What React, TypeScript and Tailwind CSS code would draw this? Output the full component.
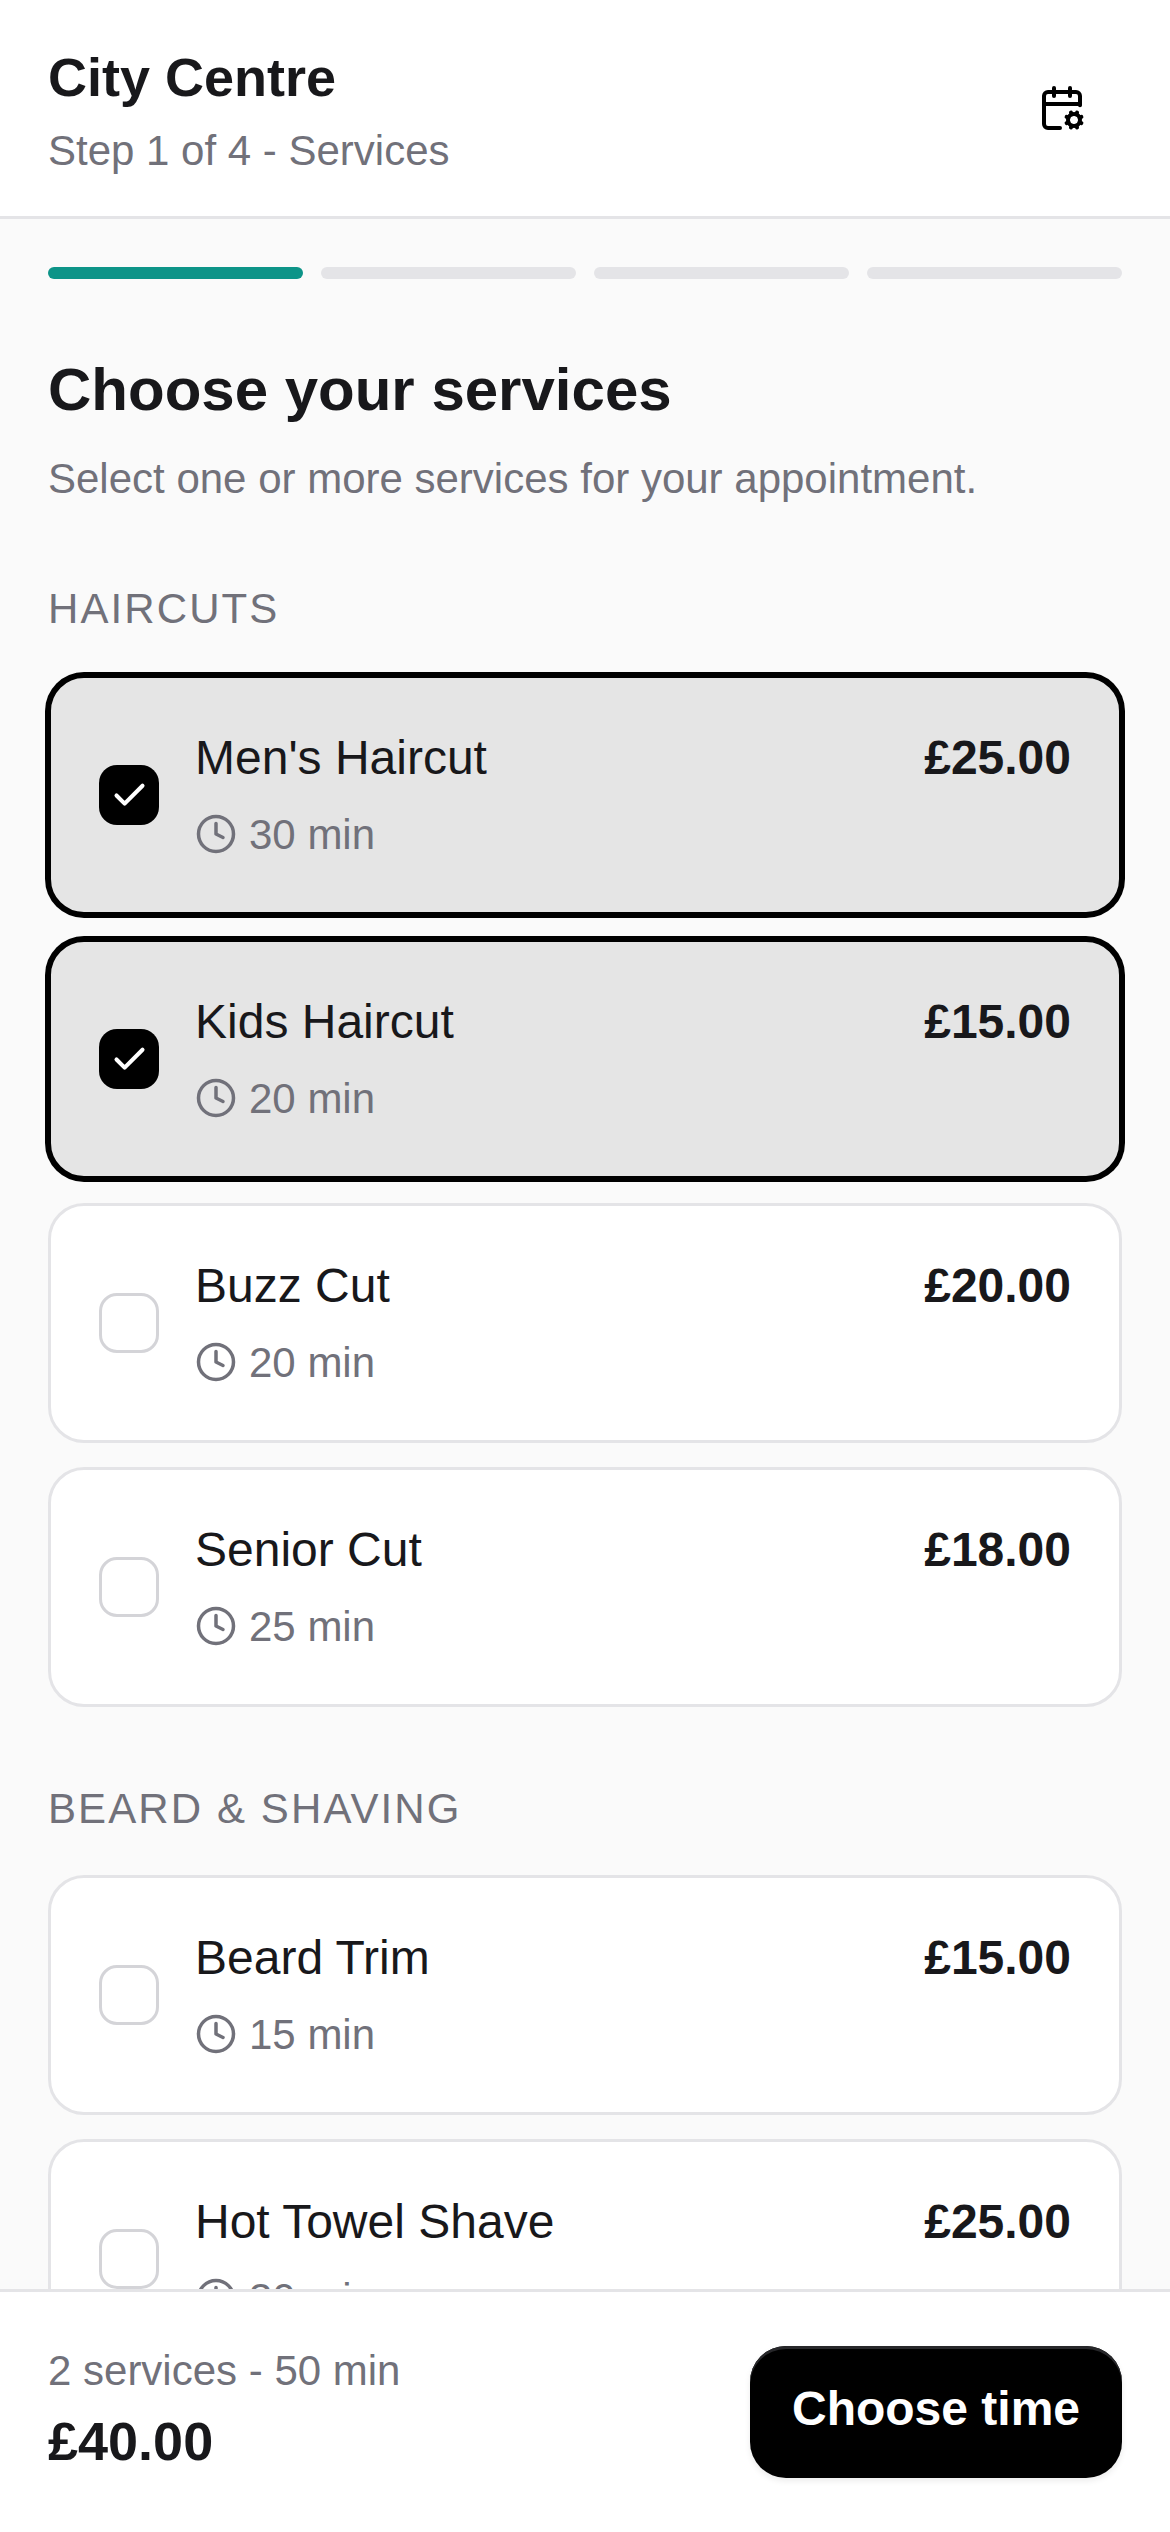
import { Check, Clock, CalendarCog } from "lucide-react";

type Service = { name: string; min: number; price: string; on?: boolean };

const haircuts: Service[] = [
  { name: "Men's Haircut", min: 30, price: "£25.00", on: true },
  { name: "Kids Haircut", min: 20, price: "£15.00", on: true },
  { name: "Buzz Cut", min: 20, price: "£20.00" },
  { name: "Senior Cut", min: 25, price: "£18.00" },
];
const beard: Service[] = [
  { name: "Beard Trim", min: 15, price: "£15.00" },
  { name: "Hot Towel Shave", min: 30, price: "£25.00" },
];

function Card({ s }: { s: Service }) {
  return (
    <div
      className={
        "flex h-[240px] shrink-0 items-center gap-[36px] rounded-[36px] border-[3px] pl-[48px] pr-[48px] " +
        (s.on
          ? "border-black bg-[#e5e5e5] shadow-[0_0_0_3px_#000]"
          : "border-[#e4e4e7] bg-white")
      }
    >
      <div
        className={
          "flex h-[60px] w-[60px] shrink-0 items-center justify-center rounded-[18px] " +
          (s.on ? "bg-black" : "border-[3px] border-[#d4d4d8] bg-white")
        }
      >
        {s.on && <Check size={39} strokeWidth={2.5} className="text-white" />}
      </div>
      <div className="flex min-w-0 flex-1 flex-col gap-[9px] pb-[3px]">
        <div className="flex items-start justify-between">
          <span className="text-[48px] leading-[72px] text-[#18181b]">{s.name}</span>
          <span className="text-[48px] font-bold leading-[72px] text-[#18181b]">{s.price}</span>
        </div>
        <div className="flex items-center gap-[12px] text-[#71717a]">
          <Clock size={42} />
          <span className="text-[42px] leading-[63px]">{s.min} min</span>
        </div>
      </div>
    </div>
  );
}

export default function App() {
  return (
    <div className="flex h-[2532px] w-[1170px] flex-col overflow-hidden bg-[#fafafa] font-['Liberation_Sans',sans-serif]">
      <header className="flex h-[219px] shrink-0 items-center justify-between border-b-[3px] border-[#e4e4e7] bg-white px-[48px]">
        <div className="flex flex-col gap-[6px] pt-[6px]">
          <h1 className="text-[54px] font-bold leading-[72px] text-[#18181b]">City Centre</h1>
          <p className="text-[42px] leading-[63px] text-[#71717a]">Step 1 of 4 - Services</p>
        </div>
        <div className="flex h-[120px] w-[120px] items-center justify-center text-black">
          <CalendarCog size={48} />
        </div>
      </header>

      <main className="flex min-h-0 flex-1 flex-col overflow-hidden px-[48px] pt-[48px]">
        <div className="flex shrink-0 gap-[18px]">
          <div className="h-[12px] flex-1 rounded-full bg-[#0d9488]" />
          <div className="h-[12px] flex-1 rounded-full bg-[#e4e4e7]" />
          <div className="h-[12px] flex-1 rounded-full bg-[#e4e4e7]" />
          <div className="h-[12px] flex-1 rounded-full bg-[#e4e4e7]" />
        </div>

        <h2 className="mt-[69px] shrink-0 text-[60px] font-bold leading-[84px] text-[#18181b]">Choose your services</h2>
        <p className="mt-[15px] shrink-0 text-[42px] leading-[63px] text-[#71717a]">
          Select one or more services for your appointment.
        </p>

        <h3 className="mt-[69px] shrink-0 text-[42px] uppercase leading-[60px] tracking-[2.1px] text-[#71717a]">Haircuts</h3>
        <div className="mt-[36px] flex shrink-0 flex-col gap-[24px]">
          {haircuts.map((s) => (
            <Card key={s.name} s={s} />
          ))}
        </div>

        <h3 className="mt-[72px] shrink-0 text-[42px] uppercase leading-[60px] tracking-[2.1px] text-[#71717a]">Beard &amp; Shaving</h3>
        <div className="mt-[36px] flex shrink-0 flex-col gap-[24px]">
          {beard.map((s) => (
            <Card key={s.name} s={s} />
          ))}
        </div>
      </main>

      <footer className="flex h-[243px] shrink-0 items-center justify-between border-t-[3px] border-[#e4e4e7] bg-white px-[48px]">
        <div className="flex flex-col pb-[6px]">
          <span className="text-[42px] leading-[63px] text-[#71717a]">2 services - 50 min</span>
          <span className="text-[54px] font-bold leading-[78px] text-[#18181b]">£40.00</span>
        </div>
        <button className="flex h-[132px] w-[372px] items-center justify-center rounded-[36px] bg-black pb-[6px] text-[48px] font-bold text-white shadow-[inset_0_3px_0_#27272a,0_3px_6px_rgba(0,0,0,0.08)]">
          Choose time
        </button>
      </footer>
    </div>
  );
}
